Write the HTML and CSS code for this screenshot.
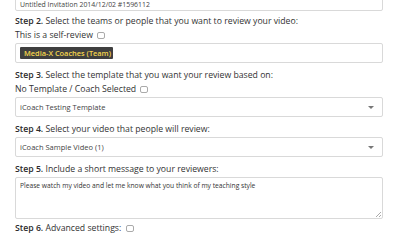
FILE: index.html
```html
<!DOCTYPE html>
<html>
<head>
<meta charset="utf-8">
<link rel="stylesheet" href="styles.css">
</head>
<body>
<div class="form">
  <div class="input first">Untitled Invitation 2014/12/02 #1596112</div>

  <div class="group g2">
    <div class="label"><b>Step 2.</b> Select the teams or people that you want to review your video:</div>
    <div class="label">This is a self-review <span class="cb"></span></div>
    <div class="input tags"><span class="tag">Media-X Coaches (Team)</span></div>
  </div>

  <div class="group">
    <div class="label"><b>Step 3.</b> Select the template that you want your review based on:</div>
    <div class="label">No Template / Coach Selected <span class="cb"></span></div>
    <div class="input select">iCoach Testing Template<span class="arrow"></span></div>
  </div>

  <div class="group">
    <div class="label"><b>Step 4.</b> Select your video that people will review:</div>
    <div class="input select">iCoach Sample Video (1)<span class="arrow"></span></div>
  </div>

  <div class="group">
    <div class="label"><b>Step 5.</b> Include a short message to your reviewers:</div>
    <div class="input textarea">Please watch my video and let me know what you think of my teaching style<span class="grip"></span></div>
  </div>

  <div class="group g6">
    <div class="label"><b>Step 6.</b> Advanced settings: <span class="cb"></span></div>
  </div>
</div>
</body>
</html>
```

FILE: styles.css
```css
html, body {
  margin: 0;
  padding: 0;
  background: #fff;
  overflow: hidden;
}
body {
  font-family: "Open Sans", "DejaVu Sans", sans-serif;
  color: #333;
}
.form {
  padding: 0 17px 0 15px;
}
.input {
  box-sizing: border-box;
  height: 20px;
  border: 1px solid #d9d9d9;
  border-radius: 2px;
  padding: 0 4px;
  font-size: 7.5px;
  line-height: 18px;
  color: #444;
  position: relative;
  margin-top: 1px;
}
.input.first {
  margin-top: -9px;
  padding-top: 7px;
  line-height: 11px;
  font-size: 6.9px;
}
.group {
  margin-top: 5px;
}
.group.g2 {
  margin-top: 3px;
}
.group.g6 {
  margin-top: 2px;
}
.label {
  font-size: 8.7px;
  line-height: 14px;
  color: #333;
  white-space: nowrap;
}
.label b {
  font-weight: 600;
  color: #2b2b2b;
}
.cb {
  display: inline-block;
  width: 6px;
  height: 5px;
  border: 1px solid #aaa;
  border-radius: 2px;
  background: #fff;
  vertical-align: -1px;
  margin-left: 2px;
}
.tags {
  display: flex;
  align-items: center;
  padding: 0 4px;
}
.tag {
  background: #3f3f3f;
  color: #f5d64c;
  font-size: 7.4px;
  font-weight: 600;
  line-height: 12px;
  padding: 0 2px 0 4px;
  border-radius: 1px;
}
.arrow {
  position: absolute;
  right: 8px;
  top: 8px;
  width: 0;
  height: 0;
  border-left: 3px solid transparent;
  border-right: 3px solid transparent;
  border-top: 3px solid #777;
}
.textarea {
  height: 42px;
  line-height: 14px;
  font-size: 6.7px;
  padding: 1px 4px;
  color: #333;
}
.grip {
  position: absolute;
  right: 1px;
  bottom: 1px;
  width: 5px;
  height: 5px;
  background: linear-gradient(135deg, transparent 45%, #aaa 45%, #aaa 55%, transparent 55%, transparent 70%, #aaa 70%, #aaa 80%, transparent 80%);
}
```
